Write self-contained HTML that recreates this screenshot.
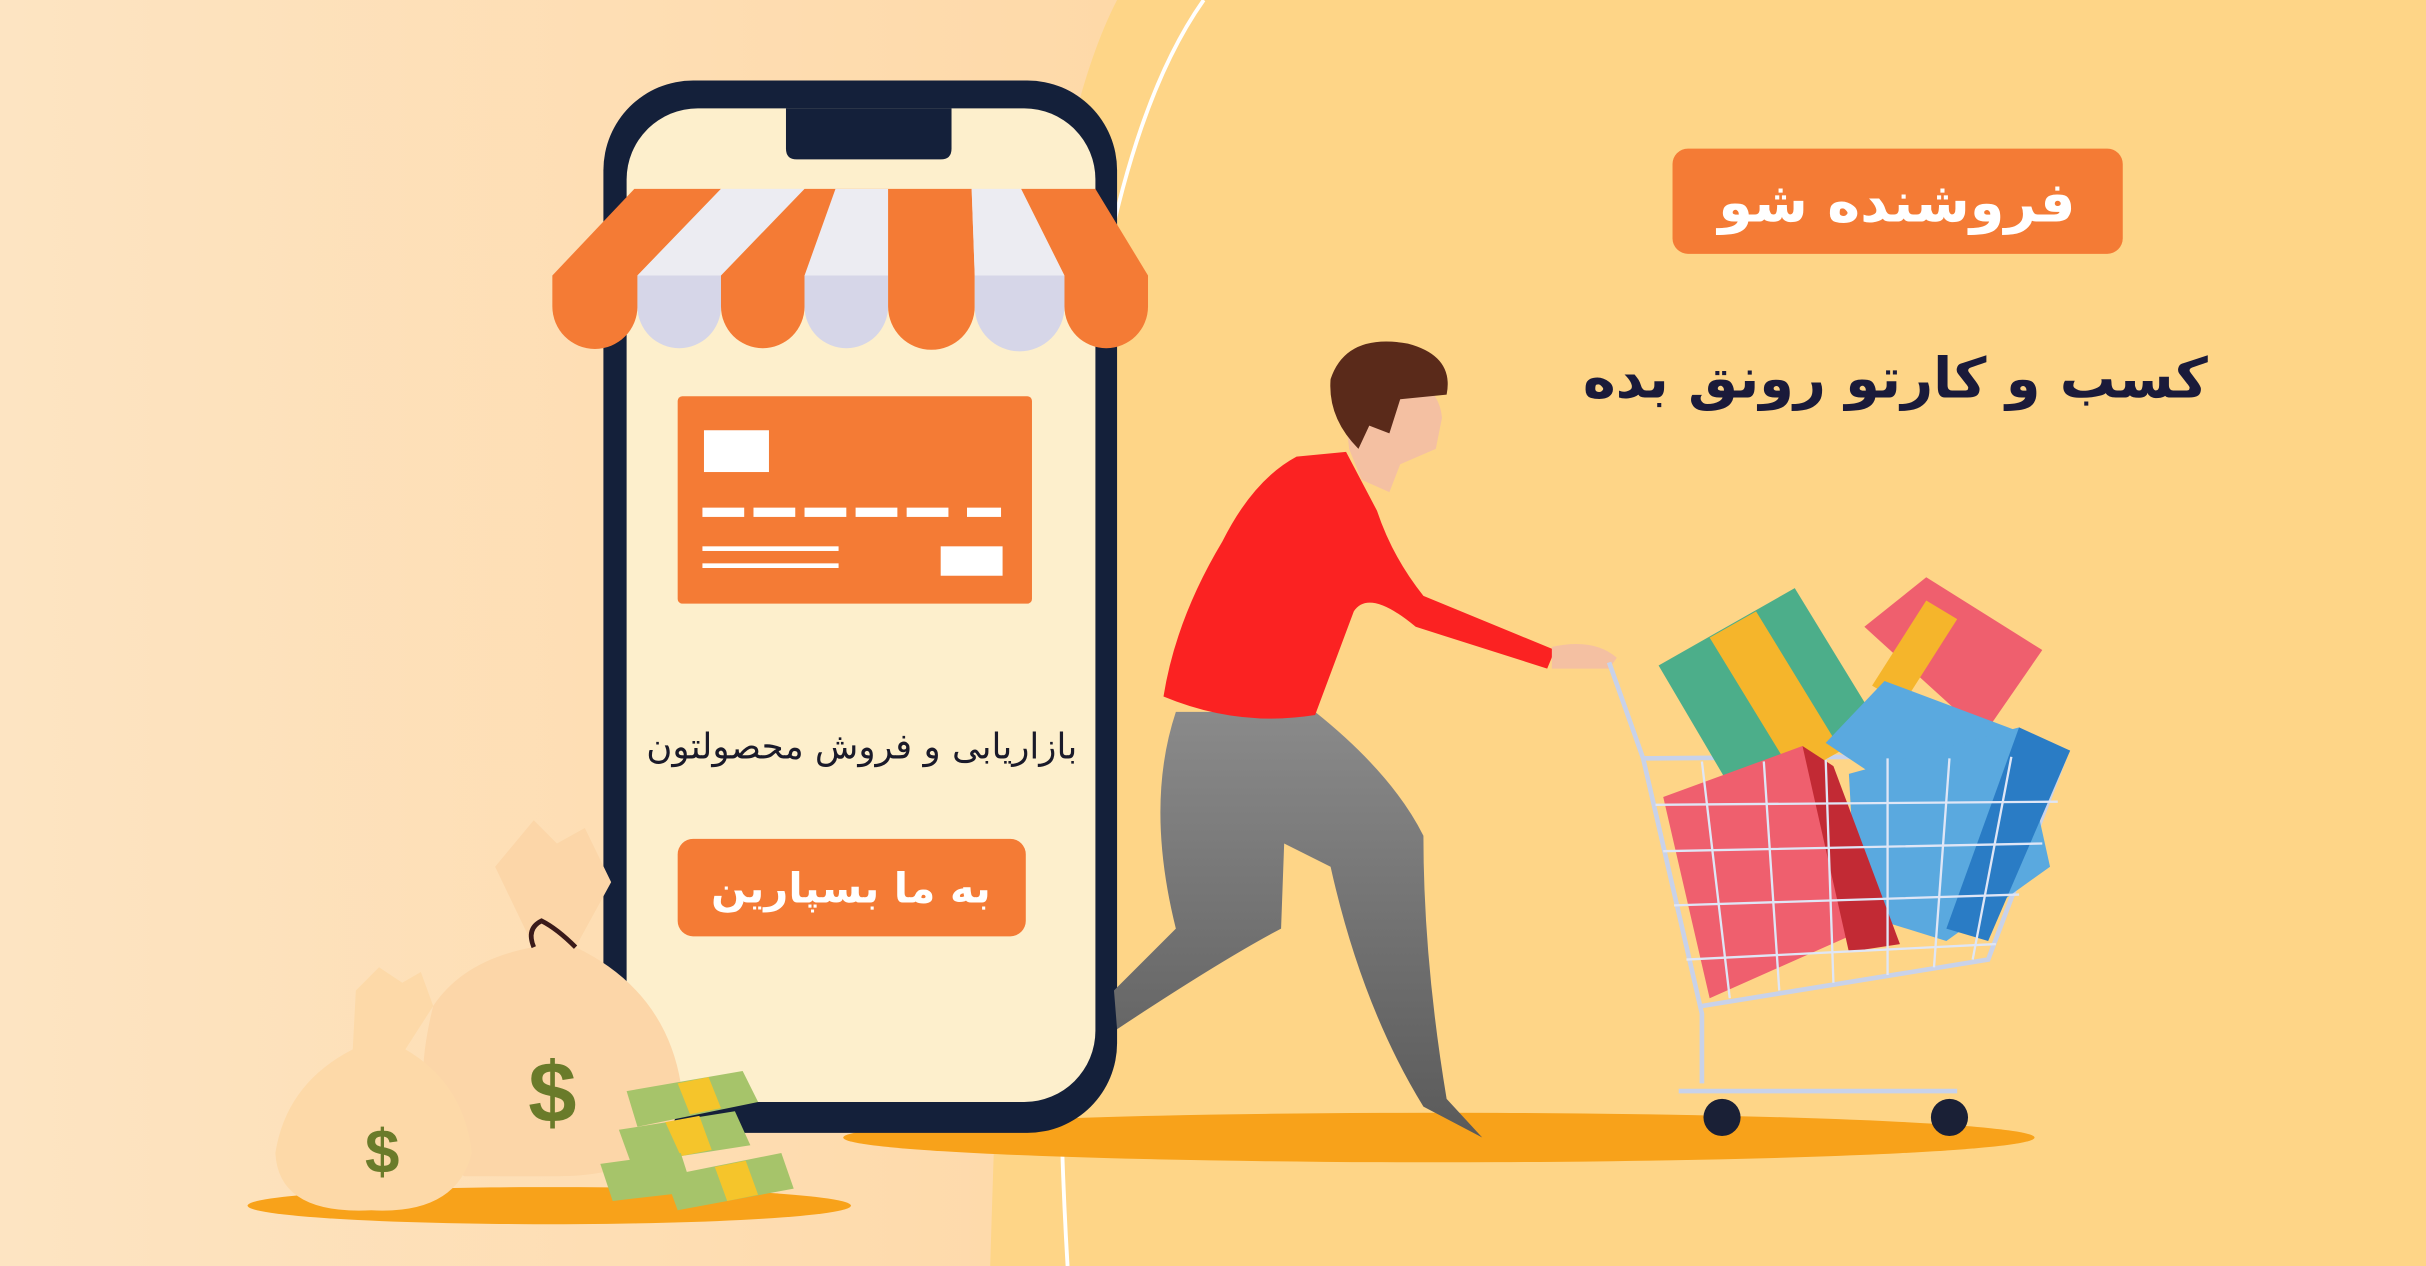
<!DOCTYPE html>
<html><head><meta charset="utf-8"><style>
html,body{margin:0;padding:0;width:2426px;height:1266px;overflow:hidden}
svg{display:block}
</style></head><body>
<svg width="2426" height="1266" viewBox="0 0 1568 818" preserveAspectRatio="none" xmlns="http://www.w3.org/2000/svg">
<defs>
<linearGradient id="lg" x1="0" y1="0" x2="1" y2="0"><stop offset="0" stop-color="#fde4c2"/><stop offset="1" stop-color="#fed9a8"/></linearGradient>
<linearGradient id="pants" x1="0" y1="0" x2="0" y2="1"><stop offset="0" stop-color="#8a8a8a"/><stop offset="1" stop-color="#5a5a5a"/></linearGradient>
</defs>
<rect width="1568" height="818" fill="#fed587"/>
<path d="M0 0 L722 0 Q670 100 655 400 Q645 650 640 818 L0 818 Z" fill="url(#lg)"/>
<path d="M778 0 Q700 110 688 420 Q680 650 690 818" fill="none" stroke="#fff" stroke-width="2.5"/>
<ellipse cx="930" cy="735" rx="385" ry="16" fill="#f8a21a"/>
<ellipse cx="355" cy="779" rx="195" ry="12" fill="#f8a21a"/>
<rect x="390" y="52" width="332" height="680" rx="58" fill="#14203a"/>
<rect x="405" y="70" width="303" height="642" rx="46" fill="#fdefcc"/>
<path d="M508 70 H615 V96 Q615 103 608 103 H515 Q508 103 508 96 Z" fill="#14203a"/>
<g>
<path d="M410 122 L357 178 L412 178 L466 122Z" fill="#f47b35"/>
<path d="M466 122 L412 178 L466 178 L520 122Z" fill="#ececf2"/>
<path d="M520 122 L466 178 L520 178 L574 122Z" fill="#f47b35"/>
<path d="M540 122 L520 178 L574 178 L574 122Z" fill="#ececf2"/>
<path d="M574 122 L574 178 L630 178 L628 122Z" fill="#f47b35"/>
<path d="M628 122 L630 178 L688 178 L660 122Z" fill="#ececf2"/>
<path d="M660 122 L688 178 L742 178 L708 122Z" fill="#f47b35"/>
<path d="M357 178 h55 v20 a27.5 27.5 0 0 1 -55 0z" fill="#f47b35"/>
<path d="M412 178 h54 v20 a27 27 0 0 1 -54 0z" fill="#d6d6e8"/>
<path d="M466 178 h54 v20 a27 27 0 0 1 -54 0z" fill="#f47b35"/>
<path d="M520 178 h54 v20 a27 27 0 0 1 -54 0z" fill="#d6d6e8"/>
<path d="M574 178 h56 v20 a28 28 0 0 1 -56 0z" fill="#f47b35"/>
<path d="M630 178 h58 v20 a29 29 0 0 1 -58 0z" fill="#d6d6e8"/>
<path d="M688 178 h54 v20 a27 27 0 0 1 -54 0z" fill="#f47b35"/>
</g>
<rect x="438" y="256" width="229" height="134" rx="3" fill="#f47b35"/>
<rect x="455" y="278" width="42" height="27" fill="#fff"/>
<g fill="#fff"><rect x="454" y="328" width="27" height="6"/><rect x="487" y="328" width="27" height="6"/><rect x="520" y="328" width="27" height="6"/><rect x="553" y="328" width="27" height="6"/><rect x="586" y="328" width="27" height="6"/><rect x="625" y="328" width="22" height="6"/>
<rect x="454" y="353" width="88" height="3"/><rect x="454" y="364" width="88" height="3"/><rect x="608" y="353" width="40" height="19"/></g>
<text x="557" y="490" text-anchor="middle" font-family="DejaVu Sans, sans-serif" font-size="23" fill="#1a1a2a" direction="rtl">بازاریابی و فروش محصولتون</text>
<rect x="438" y="542" width="225" height="63" rx="10" fill="#f47b35"/>
<text x="550" y="583" text-anchor="middle" font-family="DejaVu Sans, sans-serif" font-weight="bold" font-size="27" fill="#fff" direction="rtl">به ما بسپارین</text>
<rect x="1081" y="96" width="291" height="68" rx="10" fill="#f47b35"/>
<text x="1226" y="143" text-anchor="middle" font-family="DejaVu Sans, sans-serif" font-weight="bold" font-size="36" fill="#fff" direction="rtl">فروشنده شو</text>
<text x="1225" y="257" text-anchor="middle" font-family="DejaVu Sans, sans-serif" font-weight="bold" font-size="36" fill="#1a1a3a" direction="rtl">کسب و کارتو رونق بده</text>
<path d="M760 460 Q740 520 760 600 L720 640 L722 665 Q790 620 828 600 L830 545 L860 560 Q880 650 920 715 L958 735 L935 710 Q920 620 920 540 Q900 500 850 460Z" fill="url(#pants)"/>
<path d="M838 295 L870 292 L890 330 Q900 360 920 385 L1005 420 L1000 432 L915 405 Q885 380 875 395 L850 462 Q800 470 752 450 Q760 400 790 350 Q810 310 838 295Z" fill="#fb2222"/>
<path d="M1003 418 Q1030 412 1045 425 L1040 432 L1003 432Z" fill="#f4c0a2"/>
<path d="M868 255 Q870 240 895 238 Q930 245 932 270 L928 290 L905 300 L898 318 L880 310 L872 290Z" fill="#f4c0a2"/>
<path d="M860 245 Q870 215 910 222 Q940 230 935 255 L905 258 L898 280 L885 275 L878 290 Q858 270 860 245Z" fill="#5a2a1a"/>
<g fill="none" stroke="#c8d2ea" stroke-width="3">
<path d="M1040 428 L1062 490 L1100 655 L1100 700"/>
<path d="M1062 490 L1335 488 L1285 620 L1100 650"/>
<path d="M1085 705 L1265 705"/>
</g>
<path d="M1072 430 L1160 380 L1215 470 L1125 520Z" fill="#4cae8a"/>
<path d="M1105 412 L1135 395 L1190 485 L1160 502Z" fill="#f5b52b"/>
<path d="M1205 405 L1245 373 L1320 420 L1282 475Z" fill="#ef5f6e"/>
<path d="M1245 388 L1265 400 L1230 455 L1210 443Z" fill="#f5b52b"/>
<path d="M1180 480 L1218 440 L1338 485 L1300 560Z" fill="#5aa9df"/>
<path d="M1195 500 L1305 470 L1325 560 L1258 608 L1200 590Z" fill="#5aa9df"/>
<path d="M1305 470 L1338 485 L1285 608 L1258 600Z" fill="#2a7cc5"/>
<path d="M1075 515 L1165 482 L1195 605 L1105 645Z" fill="#ef5f6e"/>
<path d="M1165 482 L1185 495 L1228 610 L1195 615Z" fill="#c22a34"/>
<g stroke="#dfe6f6" stroke-width="1.5" fill="none">
<path d="M1070 520 L1330 518 M1075 550 L1320 545 M1082 585 L1305 578 M1090 620 L1290 610"/>
<path d="M1100 492 L1118 645 M1140 492 L1150 640 M1180 491 L1185 635 M1220 490 L1220 630 M1260 490 L1250 625 M1300 489 L1275 620"/>
</g>
<circle cx="1113" cy="722" r="12" fill="#1a2036"/><circle cx="1260" cy="722" r="12" fill="#1a2036"/>
<path d="M320 560 L345 530 L360 545 L378 535 L395 570 L372 612 Q430 640 440 700 Q440 760 360 760 L300 760 Q260 730 280 650 Q300 620 345 612Z" fill="#fcd6a8"/>
<path d="M230 640 L245 625 L260 635 L272 628 L280 650 L262 678 Q300 700 305 745 Q295 785 240 782 Q180 785 178 745 Q185 700 228 678Z" fill="#fdd9a8"/>
<text x="357" y="725" text-anchor="middle" font-family="Liberation Sans, sans-serif" font-weight="bold" font-size="56" fill="#6a7b2a">$</text>
<text x="247" y="758" text-anchor="middle" font-family="Liberation Sans, sans-serif" font-weight="bold" font-size="40" fill="#6a7b2a">$</text>
<path d="M345 612 Q340 600 350 595 Q360 600 372 612" fill="none" stroke="#3a1a1a" stroke-width="3"/>
<g>
<path d="M405 705 L480 692 L490 712 L412 728Z" fill="#a6c46a"/><path d="M438 700 L458 696 L466 716 L446 720Z" fill="#f5c52b"/>
<path d="M400 730 L475 718 L485 740 L408 752Z" fill="#a6c46a"/><path d="M430 725 L452 721 L460 743 L440 747Z" fill="#f5c52b"/>
<path d="M388 752 L440 745 L448 770 L396 776Z" fill="#a6c46a"/>
<path d="M430 760 L505 745 L513 768 L438 782Z" fill="#a6c46a"/><path d="M462 754 L482 750 L490 772 L470 776Z" fill="#f5c52b"/>
</g>
</svg>
</body></html>
